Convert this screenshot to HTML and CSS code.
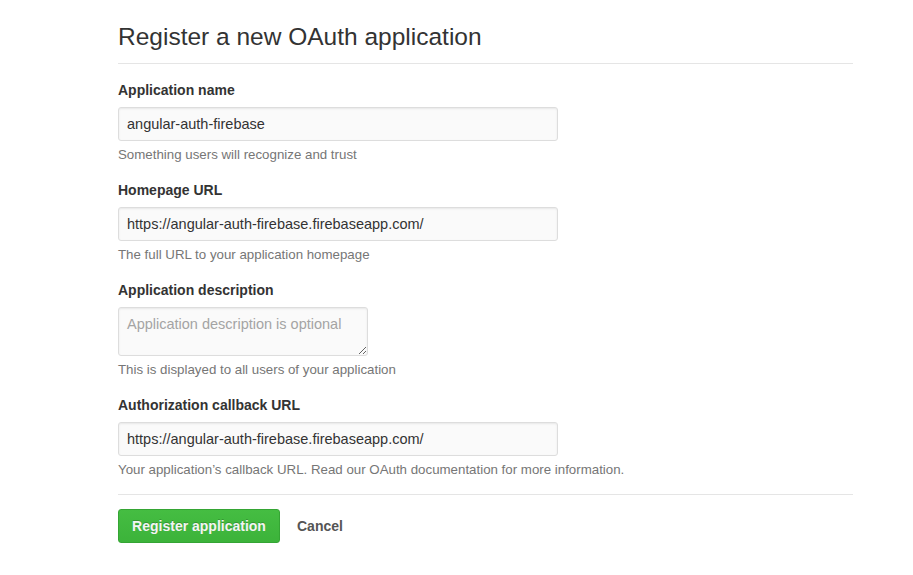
FILE: index.html
```html
<!DOCTYPE html>
<html lang="en">
<head>
<meta charset="utf-8">
<title>Register a new OAuth application</title>
<link rel="stylesheet" href="styles.css">
</head>
<body>
<main class="page">
  <div class="subhead">
    <h2 class="subhead-heading">Register a new OAuth application</h2>
  </div>
  <form class="form">
    <dl class="form-group">
      <dt><label class="label" for="name">Application name</label></dt>
      <dd>
        <input class="form-control" id="name" type="text" value="angular-auth-firebase">
        <p class="note">Something users will recognize and trust</p>
      </dd>
    </dl>
    <dl class="form-group">
      <dt><label class="label" for="url">Homepage URL</label></dt>
      <dd>
        <input class="form-control" id="url" type="text" value="https://angular-auth-firebase.firebaseapp.com/">
        <p class="note">The full URL to your application homepage</p>
      </dd>
    </dl>
    <dl class="form-group">
      <dt><label class="label" for="desc">Application description</label></dt>
      <dd>
        <textarea class="form-control textarea" id="desc" placeholder="Application description is optional"></textarea>
        <p class="note">This is displayed to all users of your application</p>
      </dd>
    </dl>
    <dl class="form-group">
      <dt><label class="label" for="cb">Authorization callback URL</label></dt>
      <dd>
        <input class="form-control" id="cb" type="text" value="https://angular-auth-firebase.firebaseapp.com/">
        <p class="note">Your application’s callback URL. Read our OAuth documentation for more information.</p>
      </dd>
    </dl>
    <div class="form-actions">
      <button class="btn-primary" type="button">Register application</button>
      <a class="btn-link" href="#">Cancel</a>
    </div>
  </form>
</main>
</body>
</html>
```

FILE: styles.css
```css
* { box-sizing: border-box; }
html, body {
  margin: 0;
  padding: 0;
  background: #fff;
}
body {
  font-family: "Liberation Sans", Arial, Helvetica, sans-serif;
  color: #333;
  font-size: 14px;
}
.page {
  width: 735px;
  margin-left: 118px;
  padding-top: 19px;
}
.subhead {
  border-bottom: 1px solid #e5e5e5;
  padding-bottom: 8px;
}
.subhead-heading {
  margin: 0;
  font-size: 24.5px;
  font-weight: normal;
  line-height: 36px;
  color: #333;
}
.form {
  padding-top: 16px;
}
.form-group {
  margin: 0 0 16px 0;
}
.form-group dt {
  margin: 0 0 7px 0;
}
.form-group dd {
  margin: 0;
}
.label {
  display: block;
  font-weight: bold;
  font-size: 14px;
  line-height: 20px;
  color: #333;
}
.form-control {
  display: block;
  width: 440px;
  height: 34px;
  padding: 6px 8px;
  font-family: inherit;
  font-size: 14.5px;
  line-height: 20px;
  color: #333;
  background: #fafafa;
  border: 1px solid #ddd;
  border-radius: 3px;
  box-shadow: inset 0 1px 2px rgba(0, 0, 0, 0.075);
  outline: none;
}
.textarea {
  width: 250px;
  height: 49px;
  resize: both;
}
.textarea::placeholder {
  color: #a4a4a4;
}
.note {
  margin: 5px 0 0 0;
  font-size: 13.3px;
  line-height: 18px;
  color: #767676;
}
.form-actions {
  border-top: 1px solid #e5e5e5;
  margin-top: -1px;
  padding-top: 14px;
  display: flex;
  align-items: center;
}
.btn-primary {
  height: 34px;
  width: 162px;
  padding: 0;
  font-family: inherit;
  font-size: 14px;
  font-weight: bold;
  color: #f4f4f4;
  text-shadow: 0 -1px 0 rgba(0, 0, 0, 0.2);
  background: linear-gradient(#45bd42, #3cb33a);
  border: 1px solid #35a534;
  border-radius: 3px;
  cursor: pointer;
}
.btn-link {
  margin-left: 17px;
  font-weight: bold;
  font-size: 14px;
  color: #555;
  text-decoration: none;
}
```
